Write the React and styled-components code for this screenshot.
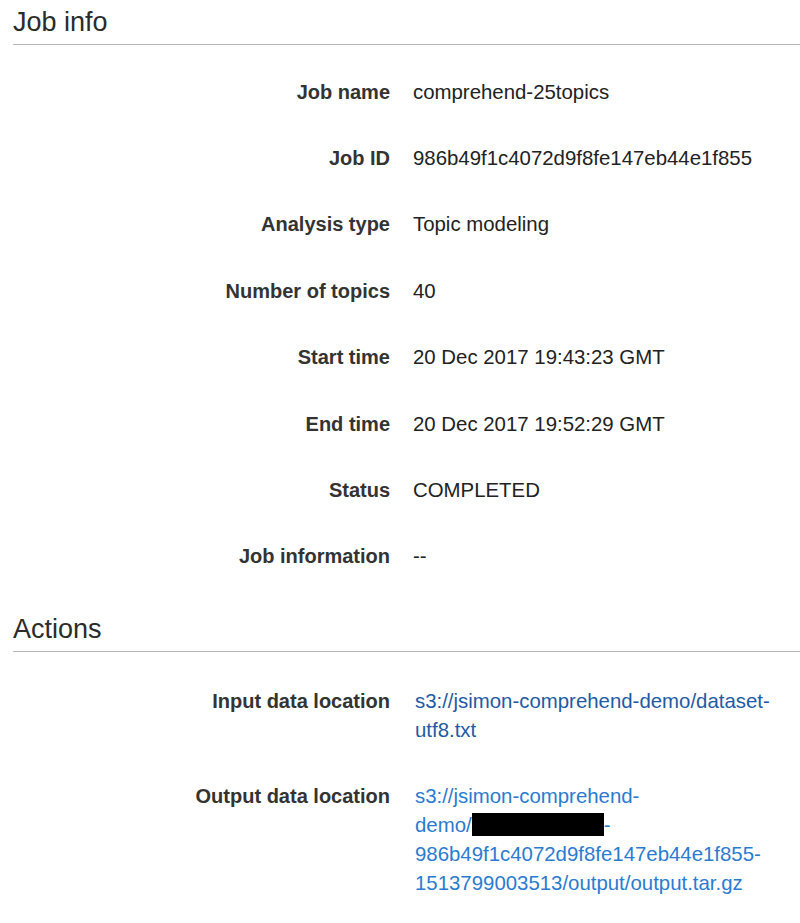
import React from 'react'
import styled, { createGlobalStyle } from 'styled-components'

const GlobalStyle = createGlobalStyle`
  html, body {
    margin: 0;
    padding: 0;
    background: #fff;
  }
  body {
    font-family: 'Liberation Sans', Arial, Helvetica, sans-serif;
    color: #333;
  }
`

const Page = styled.div`
  width: 800px;
  min-height: 923px;
  overflow: hidden;
`

const SectionTitle = styled.h2`
  margin: ${(p) => (p.$first ? '0' : '17px')} 0 0 13px;
  padding: 6px 0 6px;
  font-size: 27px;
  line-height: 32px;
  font-weight: 400;
  color: #2b2b2b;
  border-bottom: 1px solid #b7b7b7;
`

const List = styled.div`
  padding-top: ${(p) => p.$top || 14}px;
`

const Row = styled.div`
  display: grid;
  grid-template-columns: 390px 1fr;
  column-gap: 23px;
  padding: 18.7px 0;
  font-size: 20px;
  line-height: 29px;
`

const Label = styled.div`
  text-align: right;
  font-weight: 700;
  color: #333;
`

const Value = styled.div`
  color: #222;
  font-size: 20.4px;
`

const Link = styled.a`
  display: block;
  padding-left: 2px;
  font-size: 20.4px;
  color: ${(p) => (p.$visited ? '#1f5aa6' : '#2b7bd0')};
  text-decoration: none;
  white-space: nowrap;
`

const Redacted = styled.span`
  display: inline-block;
  width: 132px;
  height: 23px;
  background: #000;
  vertical-align: -4px;
`

const infoRows = [
  ['Job name', 'comprehend-25topics'],
  ['Job ID', '986b49f1c4072d9f8fe147eb44e1f855'],
  ['Analysis type', 'Topic modeling'],
  ['Number of topics', '40'],
  ['Start time', '20 Dec 2017 19:43:23 GMT'],
  ['End time', '20 Dec 2017 19:52:29 GMT'],
  ['Status', 'COMPLETED'],
  ['Job information', '--'],
]

const App = () => {
  return (
    <Page>
      <GlobalStyle />
      <SectionTitle $first>Job info</SectionTitle>
      <List>
        {infoRows.map(([label, value]) => (
          <Row key={label}>
            <Label>{label}</Label>
            <Value>{value}</Value>
          </Row>
        ))}
      </List>

      <SectionTitle>Actions</SectionTitle>
      <List $top={16}>
        <Row>
          <Label>Input data location</Label>
          <Link href="#" $visited>
            s3://jsimon-comprehend-demo/dataset-
            <br />
            utf8.txt
          </Link>
        </Row>
        <Row>
          <Label>Output data location</Label>
          <Link href="#">
            s3://jsimon-comprehend-
            <br />
            demo/
            <Redacted />-
            <br />
            986b49f1c4072d9f8fe147eb44e1f855-
            <br />
            1513799003513/output/output.tar.gz
          </Link>
        </Row>
      </List>
    </Page>
  )
}

export default App
